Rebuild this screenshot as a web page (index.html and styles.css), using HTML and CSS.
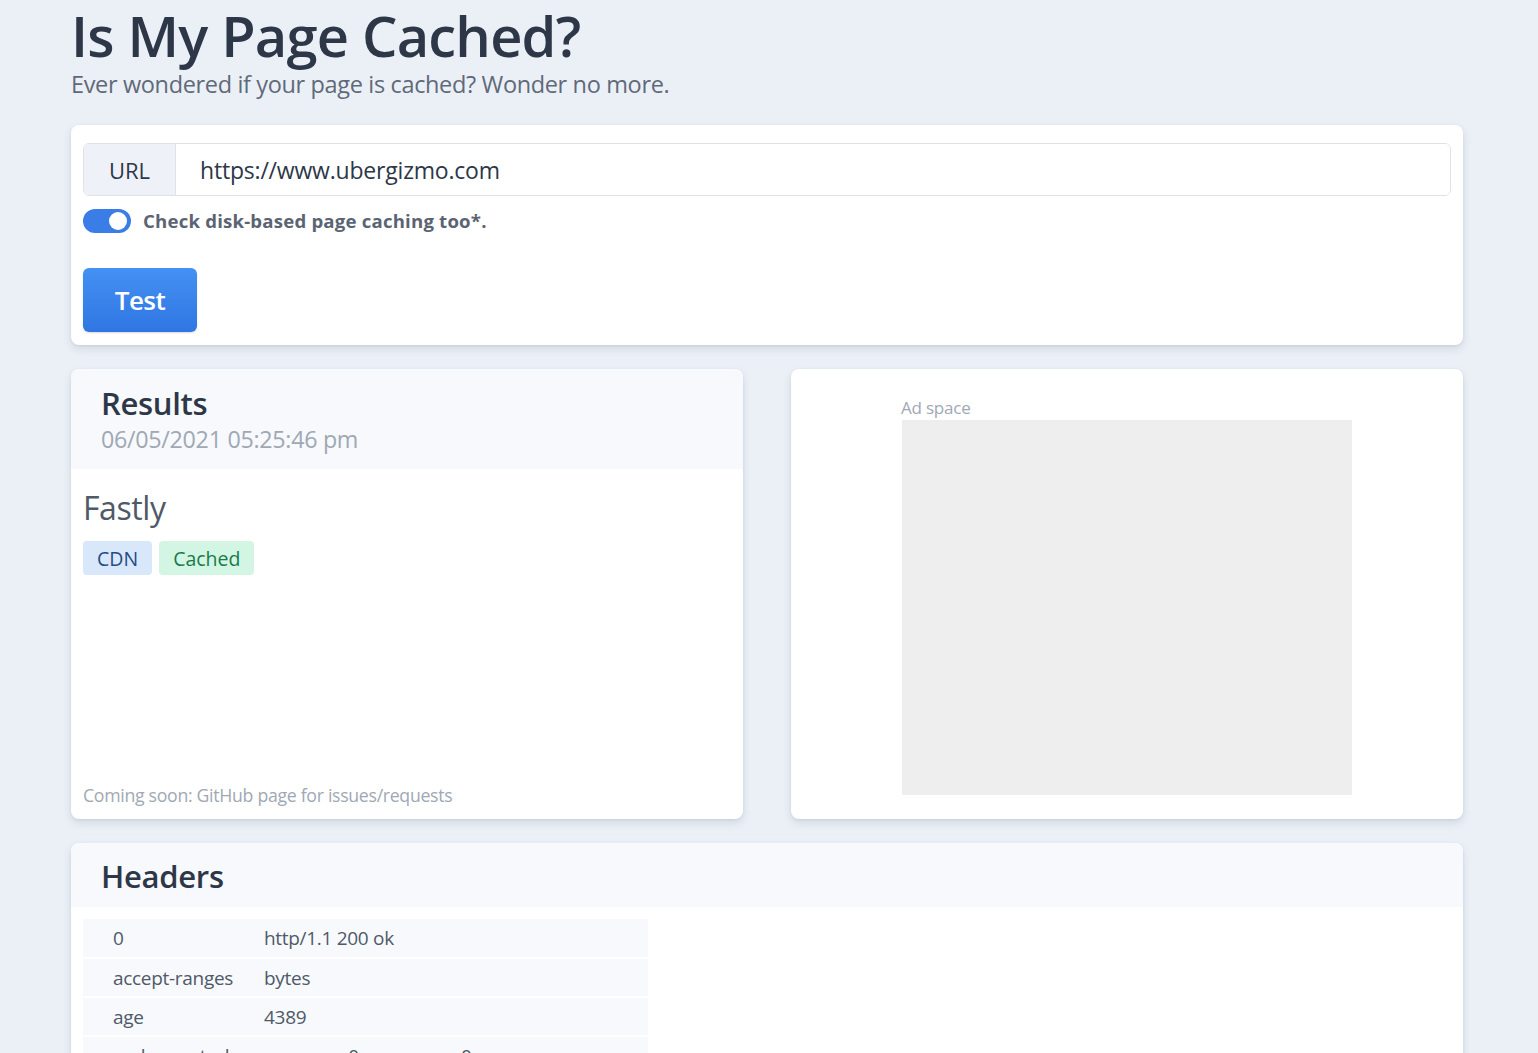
FILE: index.html
```html
<!DOCTYPE html>
<html>
<head>
<meta charset="utf-8">
<link rel="stylesheet" href="styles.css">
</head>
<body>
<div class="container">
  <header class="hero">
    <h1 class="title">Is My Page Cached?</h1>
    <p class="subtitle">Ever wondered if your page is cached? Wonder no more.</p>
  </header>

  <section class="card form-card">
    <div class="input-group">
      <span class="addon">URL</span>
      <input class="url-input" type="text" value="https://www.ubergizmo.com">
    </div>
    <label class="toggle-row">
      <span class="toggle"><span class="knob"></span></span>
      <span class="toggle-label">Check disk-based page caching too*.</span>
    </label>
    <button class="btn">Test</button>
  </section>

  <div class="grid">
    <section class="card results">
      <div class="card-head">
        <h2 class="card-title">Results</h2>
        <div class="date">06/05/2021 05:25:46 pm</div>
      </div>
      <div class="results-body">
        <h3 class="provider">Fastly</h3>
        <div class="badges">
          <span class="badge badge-blue">CDN</span>
          <span class="badge badge-green">Cached</span>
        </div>
        <p class="soon">Coming soon: GitHub page for issues/requests</p>
      </div>
    </section>
    <section class="card ad">
      <div class="ad-inner">
        <div class="ad-label">Ad space</div>
        <div class="ad-box"></div>
      </div>
    </section>
  </div>

  <section class="card headers">
    <div class="card-head head-sm">
      <h2 class="card-title">Headers</h2>
    </div>
    <div class="table-wrap">
      <table class="htable">
        <tr><td class="k">0</td><td>http/1.1 200 ok</td></tr>
        <tr><td class="k">accept-ranges</td><td>bytes</td></tr>
        <tr><td class="k">age</td><td>4389</td></tr>
        <tr><td class="k">cache-control</td><td>max-age=0, s-maxage=0</td></tr>
      </table>
    </div>
  </section>
</div>
</body>
</html>
```

FILE: styles.css
```css
* { box-sizing: border-box; }
html, body { margin: 0; padding: 0; }
body {
  background: #ebf0f7;
  font-family: "Open Sans", "Noto Sans", sans-serif;
  color: #2d3748;
  height: 1053px;
  overflow: hidden;
}
.container {
  width: 1392px;
  margin-left: 71px;
}
.hero { padding-top: 3px; }
.title {
  margin: 0;
  font-size: 56px;
  font-weight: 600;
  line-height: 65px;
  color: #2d3748;
  letter-spacing: -0.8px;
}
.subtitle {
  margin: 0;
  font-size: 23.5px;
  line-height: 32px;
  color: #5f6a79;
  letter-spacing: -0.35px;
}
.card {
  background: #fff;
  border-radius: 8px;
  box-shadow: 0 4px 8px rgba(45, 55, 72, 0.12), 0 1px 3px rgba(45, 55, 72, 0.08);
  overflow: hidden;
}
.form-card {
  margin-top: 25px;
  padding: 18px 12px 12px;
  height: 220px;
}
.input-group {
  display: flex;
  height: 53px;
  border: 1px solid #dfe3e8;
  border-radius: 6px;
  overflow: hidden;
}
.addon {
  width: 92px;
  background: #eef2f8;
  border-right: 1px solid #dfe3e8;
  display: flex;
  align-items: center;
  justify-content: center;
  font-size: 22px;
  color: #2d3748;
}
.url-input {
  flex: 1;
  border: 0;
  outline: none;
  padding: 0 24px;
  font-family: inherit;
  font-size: 23px;
  color: #2d3748;
  letter-spacing: -0.2px;
}
.toggle-row {
  display: flex;
  align-items: center;
  gap: 12px;
  margin-top: 12px;
  height: 25px;
}
.toggle {
  width: 48px;
  height: 24px;
  border-radius: 12px;
  background: #3b7de6;
  position: relative;
}
.knob {
  position: absolute;
  right: 4px;
  top: 3px;
  width: 18px;
  height: 18px;
  border-radius: 50%;
  background: #fff;
}
.toggle-label {
  font-size: 18.6px;
  font-weight: 700;
  color: #5a6472;
  letter-spacing: 0.2px;
}
.btn {
  display: block;
  margin-top: 35px;
  width: 114px;
  height: 64px;
  border: 0;
  border-radius: 6px;
  background: linear-gradient(#4490f3, #2f76e2);
  color: #fff;
  font-family: inherit;
  font-size: 26px;
  font-weight: 600;
  letter-spacing: -0.5px;
  box-shadow: 0 1px 2px rgba(0,0,0,0.15);
}
.grid {
  display: grid;
  grid-template-columns: 1fr 1fr;
  gap: 48px;
  margin-top: 24px;
}
.results, .ad { height: 450px; }
.card-head {
  background: #f7f9fc;
  padding: 14px 30px 0;
  height: 100px;
}
.card-title {
  margin: 0;
  font-size: 31px;
  font-weight: 600;
  line-height: 40px;
  color: #2d3748;
  letter-spacing: -0.3px;
}
.date {
  font-size: 23.3px;
  color: #a0a8b5;
  line-height: 32px;
  letter-spacing: -0.3px;
}
.results-body {
  padding: 18px 12px 0;
  display: flex;
  flex-direction: column;
  height: 350px;
}
.provider {
  margin: 0;
  font-size: 32px;
  font-weight: 400;
  line-height: 42px;
  color: #4f5968;
  letter-spacing: -0.4px;
}
.badges {
  display: flex;
  gap: 7px;
  margin-top: 12px;
}
.badge {
  height: 34px;
  padding: 0 14px;
  border-radius: 4px;
  font-size: 19.5px;
  display: flex;
  align-items: center;
}
.badge-blue { background: #d9e7fa; color: #264b86; }
.badge-green { background: #d2f6e3; color: #1a7a4c; }
.soon {
  margin: auto 0 12px;
  font-size: 17.7px;
  color: #a0a8b5;
  letter-spacing: -0.3px;
}
.ad-inner {
  padding: 27px 0 0 110px;
}
.ad-label {
  font-size: 17px;
  color: #a0a8b5;
  line-height: 24px;
  letter-spacing: -0.2px;
}
.ad-box {
  width: 450px;
  height: 375px;
  background: #eeeeee;
  margin-left: 1px;
}
.headers { margin-top: 24px; height: 400px; }
.head-sm { height: 64px; padding-top: 13px; }
.table-wrap { padding: 12px 12px; }
.htable {
  border-collapse: collapse;
  width: 565px;
  font-size: 19px;
  color: #4f5968;
}
.htable td {
  background: #f7f9fc;
  height: 39px;
  border-bottom: 2px solid #fff;
  padding: 0 0 0 30px;
  white-space: nowrap;
  letter-spacing: -0.3px;
}
.htable td.k { width: 181px; }
.htable td + td { padding-left: 0; }
```
